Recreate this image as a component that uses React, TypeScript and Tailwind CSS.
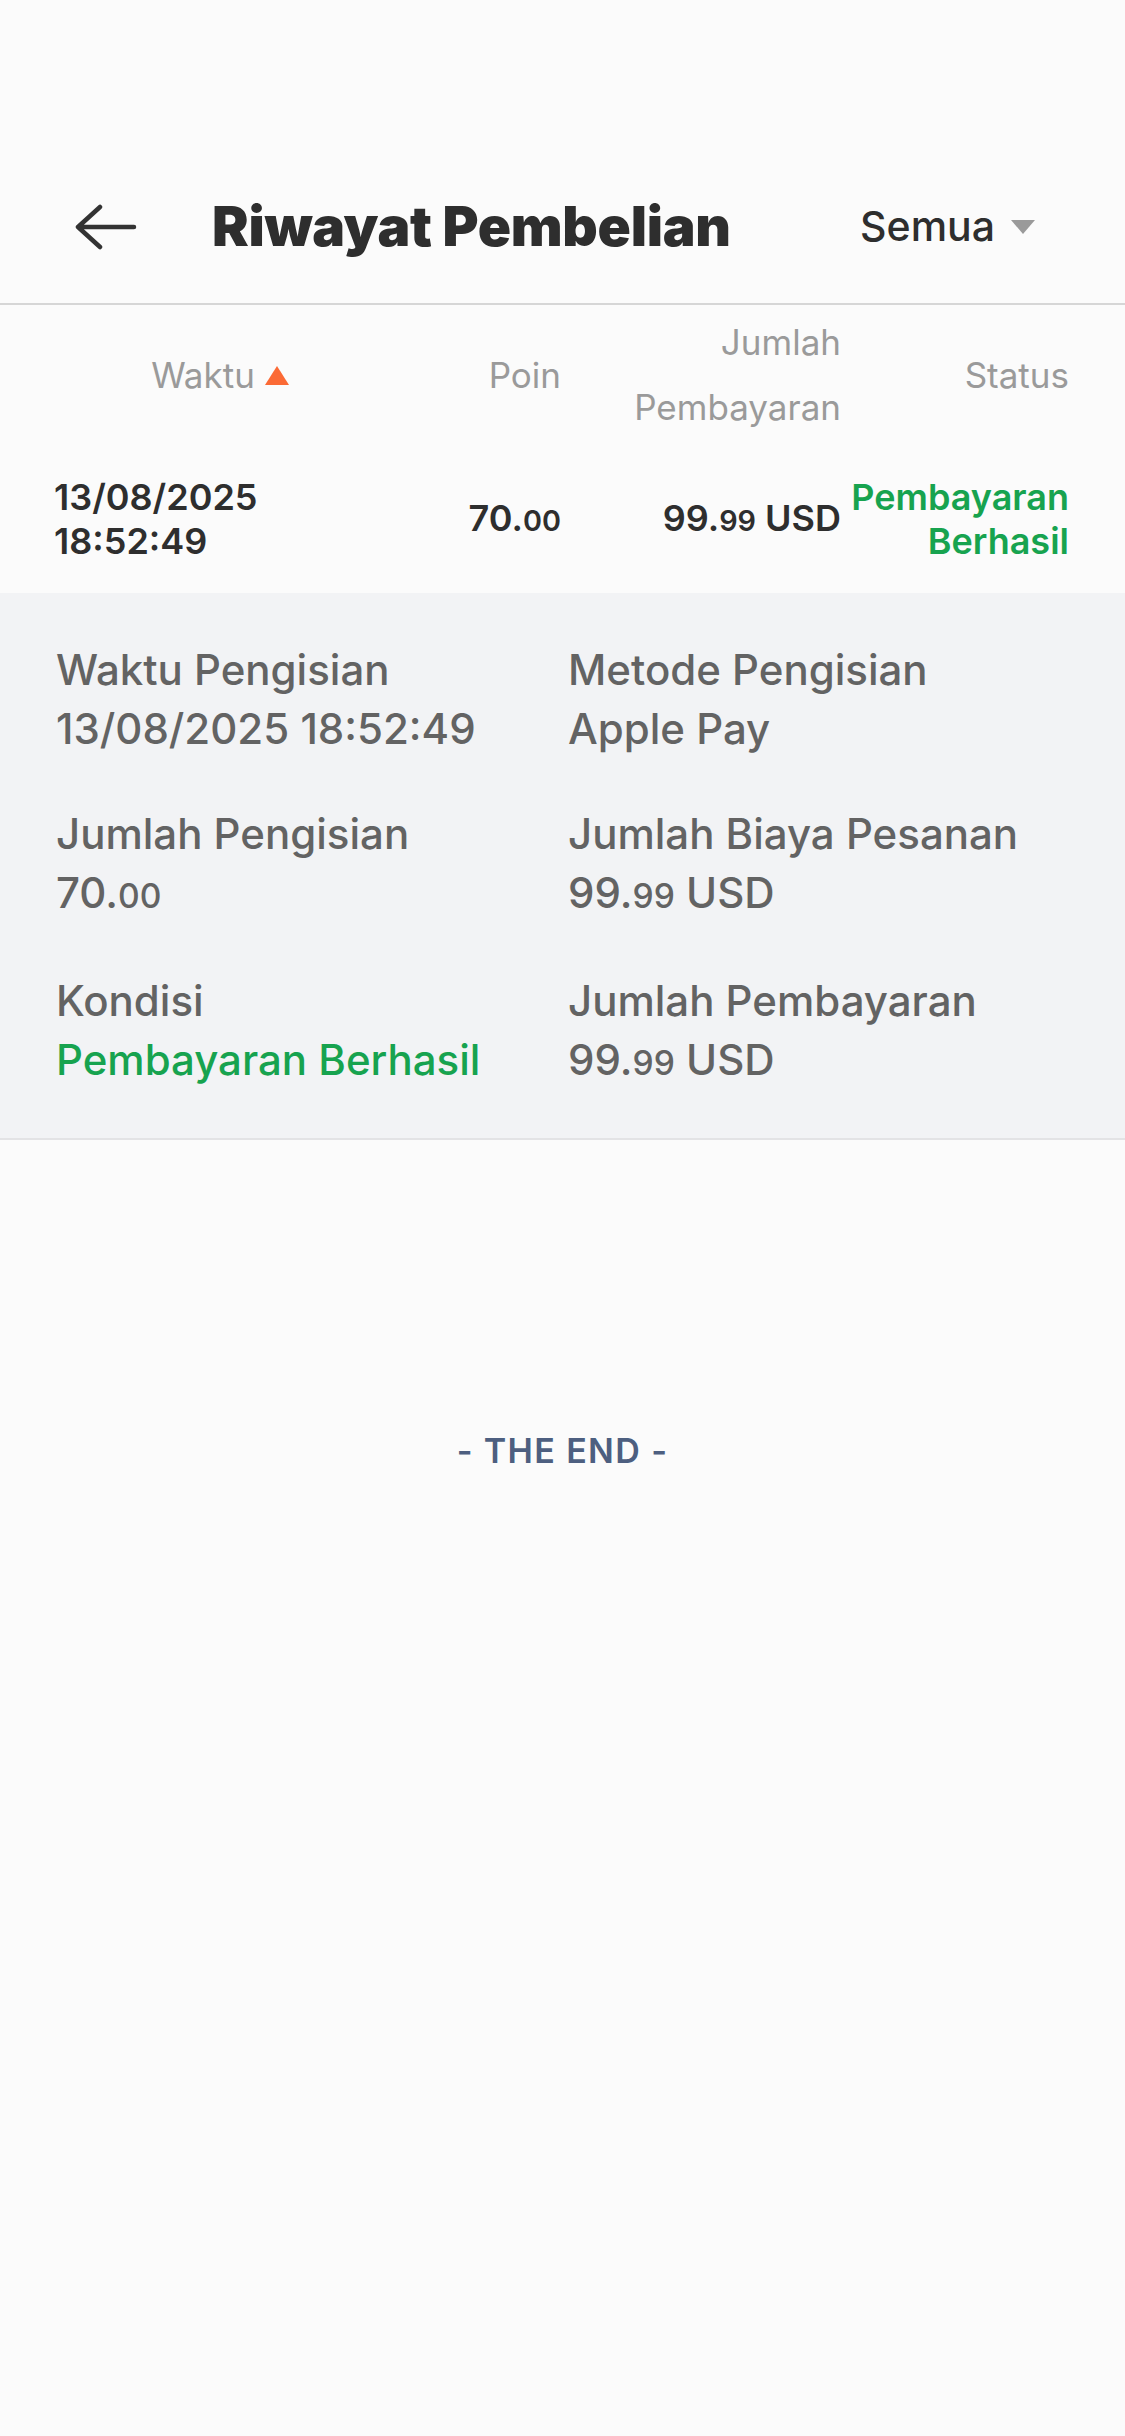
import React from "react";

const font = { fontFamily: "Inter, 'Noto Sans', sans-serif" };

function Amount({ whole, frac, unit }: { whole: string; frac: string; unit?: string }) {
  return (
    <span>
      {whole}.<span className="text-[0.8em]">{frac}</span>
      {unit ? ` ${unit}` : null}
    </span>
  );
}

function Detail({ label, children }: { label: string; children: React.ReactNode }) {
  return (
    <div className="flex flex-col">
      <span className="leading-[59px]">{label}</span>
      <span className="leading-[59px]">{children}</span>
    </div>
  );
}

export default function App() {
  return (
    <div className="min-h-[2436px] w-[1125px] bg-[#fbfbfb] pt-[150px]" style={font}>
      <header className="flex h-[155px] items-center border-b-2 border-[#d6d6d6] pl-[74px] pr-[90px]">
        <svg width="64" height="46" viewBox="0 0 64 46" fill="none" className="shrink-0">
          <path d="M60 23H4M26 3L4 23l22 20" stroke="#333" strokeWidth="4.5" strokeLinecap="round" strokeLinejoin="round" />
        </svg>
        <h1 className="ml-[74px] text-[55px] font-black tracking-[-0.005em] text-[#2e2e2e]">Riwayat Pembelian</h1>
        <div className="ml-auto flex items-center gap-[16px]">
          <span className="text-[41px] font-medium text-[#2e2e2e]">Semua</span>
          <span className="h-0 w-0 border-x-[12px] border-t-[14px] border-x-transparent border-t-[#9a9a9a]" />
        </div>
      </header>

      <div className="grid h-[140px] grid-cols-[332px_175px_280px_228px] items-center pl-[54px] text-[35px] text-[#9a9a9a]">
        <div className="flex items-center justify-center gap-[10px]">
          <span>Waktu</span>
          <span className="h-0 w-0 border-x-[12px] border-b-[19px] border-x-transparent border-b-[#fb6a35]" />
        </div>
        <div className="text-right">Poin</div>
        <div className="text-right leading-[65px]">
          Jumlah
          <br />
          Pembayaran
        </div>
        <div className="text-right">Status</div>
      </div>

      <div className="grid h-[148px] grid-cols-[332px_175px_280px_228px] items-center pl-[54px] text-[36px] font-semibold leading-[44px] text-[#2e2e2e]">
        <div>
          13/08/2025
          <br />
          18:52:49
        </div>
        <div className="text-right">
          <Amount whole="70" frac="00" />
        </div>
        <div className="text-right">
          <Amount whole="99" frac="99" unit="USD" />
        </div>
        <div className="text-right text-[#17a34f]">
          Pembayaran
          <br />
          Berhasil
        </div>
      </div>

      <section className="grid grid-cols-[512px_1fr] gap-y-[46px] border-b-2 border-[#e3e3e5] bg-[#f2f3f5] pb-[46px] pl-[56px] pt-[47px] text-[42px] font-medium text-[#636363]">
        <Detail label="Waktu Pengisian">13/08/2025 18:52:49</Detail>
        <Detail label="Metode Pengisian">Apple Pay</Detail>
        <Detail label="Jumlah Pengisian">
          <Amount whole="70" frac="00" />
        </Detail>
        <Detail label="Jumlah Biaya Pesanan">
          <Amount whole="99" frac="99" unit="USD" />
        </Detail>
        <Detail label="Kondisi">
          <span className="text-[#17a34f]">Pembayaran Berhasil</span>
        </Detail>
        <Detail label="Jumlah Pembayaran">
          <Amount whole="99" frac="99" unit="USD" />
        </Detail>
      </section>

      <p className="mt-[285px] text-center text-[34px] font-semibold tracking-[0.04em] text-[#4d5f80]">- THE END -</p>
    </div>
  );
}
